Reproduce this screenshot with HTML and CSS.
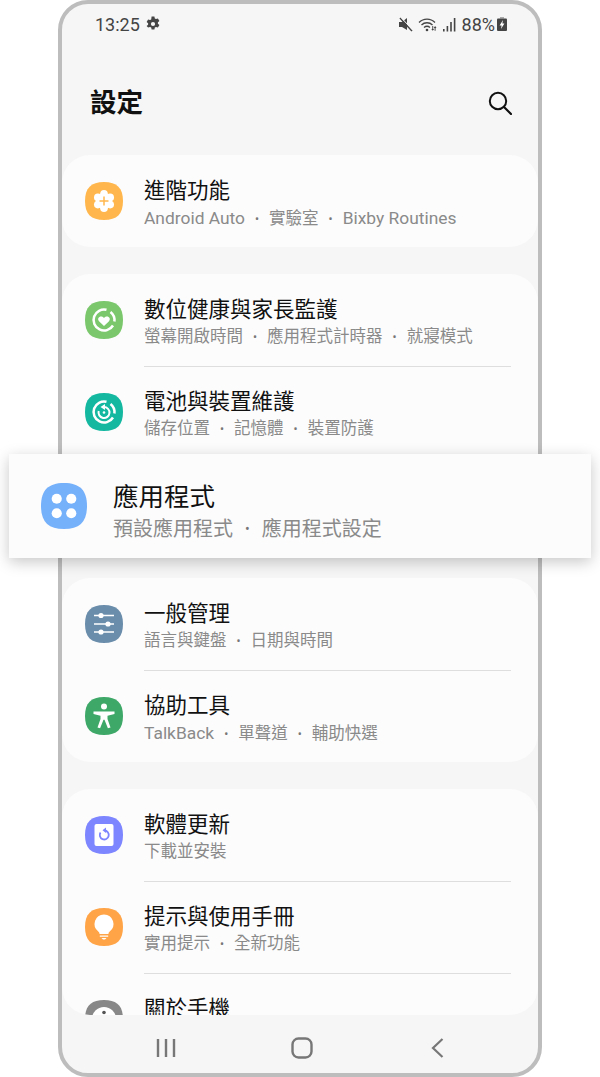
FILE: index.html
```html
<!doctype html>
<html lang="zh-Hant">
<head>
<meta charset="utf-8">
<title>設定</title>
<link rel="stylesheet" href="styles.css">
</head>

<body>
	<div class="phone">
		<div class="screen">
			<div class="status">
				<span class="time">13:25</span>
				<svg class="st-gear" viewBox="0 0 16 16"><path fill-rule="evenodd" fill="#444" d="M6.6 .5h2.800l.4 1.900 1.200.7 1.900-.6 1.500 2.500-1.500 1.300v1.400l1.500 1.300-1.500 2.500-1.900-.6-1.200.7-.4 1.900H6.600l-.4-1.900-1.200-.7-1.900.6L1.600 10l1.500-1.300V7.300L1.600 6l1.500-2.500 1.900.6 1.200-.7zM8 5.900a2.100 2.100 0 1 0 0 4.200 2.100 2.100 0 0 0 0-4.200z"/></svg>
				<span class="st-space"></span>
				<svg class="st-mute" viewBox="0 0 15 15"><path fill="#444" d="M1 5h3l5-4v12L4 10H1z"/><path stroke="#444" stroke-width="1.600" d="M2 1l12 13"/><path stroke="#f6f6f6" stroke-width="1" d="M3.200 .6l11.600 12.600"/></svg>
				<svg class="st-wifi" viewBox="0 0 20 15"><g fill="none" stroke="#444" stroke-width="1.300"><path d="M1 5.500C5.500 1 12.500 1 17 5.500"/><path d="M3.500 8C6.500 5 11.500 5 14.500 8"/><path d="M6 10.500c2-1.700 4-1.700 6 0"/></g><circle cx="9" cy="13" r="1.300" fill="#444"/><path fill="#444" d="M15 9v3h-1l1.500 2 1.500-2h-1V9zM18.500 14v-3h1l-1.500-2-1.500 2h1v3z" transform="translate(0 .5) scale(.95)"/></svg>
				<svg class="st-signal" viewBox="0 0 13 15"><g fill="#444"><rect x="0" y="12" width="1.600" height="2.500"/><rect x="3.600" y="9" width="1.600" height="5.500"/><rect x="7.200" y="5" width="1.600" height="9.500"/><rect x="10.800" y="1" width="1.600" height="13.500"/></g></svg>
				<span class="batt">88%</span>
				<svg class="st-batt" viewBox="0 0 10 14"><path fill="#aaa" d="M3 0h4v1.500H3z"/><rect y="1.500" width="10" height="12.500" rx="1" fill="#444"/><path fill="#fff" d="M6 3L2.600 8.400h2L4 12l3.400-5.400h-2z"/></svg>
			</div>

			<div class="header">
				<h1>設定</h1>
				<svg class="search" viewBox="0 0 24 24"><circle cx="10" cy="10" r="8.200" fill="none" stroke="#111" stroke-width="2"/><path d="M16 16l7 7" stroke="#111" stroke-width="2.200" stroke-linecap="round"/></svg>
			</div>

			<div class="list">
				<div class="card">
					<div class="row">
						<svg class="ico" viewBox="0 0 38 38"><path fill="#ffb74d" d="M19 0C32 0 38 6 38 19S32 38 19 38 0 32 0 19 6 0 19 0z"/><g fill="#fff"><circle cx="19" cy="19" r="8"/><circle cx="19" cy="11.800" r="3.800"/><circle cx="19" cy="26.200" r="3.800"/><circle cx="12.800" cy="15.400" r="3.800"/><circle cx="25.200" cy="15.400" r="3.800"/><circle cx="12.800" cy="22.600" r="3.800"/><circle cx="25.200" cy="22.600" r="3.800"/></g><path stroke="#ffb74d" stroke-width="1.500" d="M14.500 19h9M19 14.500v9"/></svg>
						<div class="txt">
							<div class="tt">進階功能</div>
							<div class="sub"><span class="en">Android Auto</span><i>•</i>實驗室<i>•</i><span class="en">Bixby Routines</span></div>
						</div>
					</div>
				</div>

				<div class="card">
					<div class="row">
						<svg class="ico" viewBox="0 0 38 38"><path fill="#7bc86c" d="M19 0C32 0 38 6 38 19S32 38 19 38 0 32 0 19 6 0 19 0z"/><g fill="none" stroke="#fff" stroke-width="2.500"><path d="M21.500 8.800A10.500 10.500 0 1 0 28 24.500"/><path d="M25.500 11a10.500 10.500 0 0 1 3.900 9.500"/></g><path fill="#fff" d="M19 25l-5-4.800c-2.600-2.800 1.500-6.800 5-3.200 3.500-3.600 7.600.4 5 3.200z"/></svg>
						<div class="txt">
							<div class="tt">數位健康與家長監護</div>
							<div class="sub">螢幕開啟時間<i>•</i>應用程式計時器<i>•</i>就寢模式</div>
						</div>
					</div>
					<div class="row">
						<svg class="ico" viewBox="0 0 38 38"><path fill="#14b8a0" d="M19 0C32 0 38 6 38 19S32 38 19 38 0 32 0 19 6 0 19 0z"/><g fill="none" stroke="#fff" stroke-width="2.500"><path d="M21.500 8.800A10.500 10.500 0 1 0 28 24.500"/><path d="M25.500 11a10.500 10.500 0 0 1 3.900 9.500"/><path stroke-width="2" d="M19 14a5.500 5.500 0 1 1-5.300 4"/></g><path fill="#fff" d="M15.500 14l4.500-3v6z"/><circle cx="19" cy="19.500" r="1.300" fill="#fff"/></svg>
						<div class="txt">
							<div class="tt">電池與裝置維護</div>
							<div class="sub">儲存位置<i>•</i>記憶體<i>•</i>裝置防護</div>
						</div>
					</div>
					<div class="row row-covered"></div>
				</div>

				<div class="card">
					<div class="row">
						<svg class="ico" viewBox="0 0 38 38"><path fill="#6a8dab" d="M19 0C32 0 38 6 38 19S32 38 19 38 0 32 0 19 6 0 19 0z"/><path stroke="#fff" stroke-width="1.500" d="M9 10.500h20M9 19h20M9 27h20"/><g fill="#fff"><circle cx="16" cy="10.500" r="2.600"/><circle cx="23" cy="19" r="2.600"/><circle cx="16" cy="27" r="2.600"/></g></svg>
						<div class="txt">
							<div class="tt">一般管理</div>
							<div class="sub">語言與鍵盤<i>•</i>日期與時間</div>
						</div>
					</div>
					<div class="row">
						<svg class="ico" viewBox="0 0 38 38"><path fill="#3ea868" d="M19 0C32 0 38 6 38 19S32 38 19 38 0 32 0 19 6 0 19 0z"/><circle cx="19" cy="9.500" r="3" fill="#fff"/><path fill="#fff" d="M8.500 14.500h21v2.600l-7 1.600v3.300l3 8.500-2.600.8-3.400-8.500h-1l-3.400 8.500-2.600-.8 3-8.500v-3.300l-7-1.600z"/></svg>
						<div class="txt">
							<div class="tt">協助工具</div>
							<div class="sub"><span class="en">TalkBack</span><i>•</i>單聲道<i>•</i>輔助快選</div>
						</div>
					</div>
				</div>

				<div class="card">
					<div class="row">
						<svg class="ico" viewBox="0 0 38 38"><path fill="#7d85ff" d="M19 0C32 0 38 6 38 19S32 38 19 38 0 32 0 19 6 0 19 0z"/><rect x="9.500" y="8" width="19" height="22" rx="2" fill="#fff"/><path fill="none" stroke="#7d85ff" stroke-width="1.800" d="M15.500 16.500a4.500 4.500 0 1 0 4-2"/><path fill="#7d85ff" d="M21 11.500v5.500l-3.500-2.700z"/></svg>
						<div class="txt">
							<div class="tt">軟體更新</div>
							<div class="sub">下載並安裝</div>
						</div>
					</div>
					<div class="row">
						<svg class="ico" viewBox="0 0 38 38"><path fill="#ffa447" d="M19 0C32 0 38 6 38 19S32 38 19 38 0 32 0 19 6 0 19 0z"/><path fill="#fff" d="M19 6.500a9.500 9.500 0 0 1 5.500 17.200c-.8.600-1 1.300-1 2.300h-9c0-1-.2-1.700-1-2.300A9.500 9.500 0 0 1 19 6.500zM14.800 27.500h8.400v1.300h-8.400zM16.500 30h5L20 31.500h-2z"/></svg>
						<div class="txt">
							<div class="tt">提示與使用手冊</div>
							<div class="sub">實用提示<i>•</i>全新功能</div>
						</div>
					</div>
					<div class="row">
						<svg class="ico" viewBox="0 0 38 38"><path fill="#888" d="M19 0C32 0 38 6 38 19S32 38 19 38 0 32 0 19 6 0 19 0z"/><circle cx="19" cy="19" r="12" fill="#fff"/><circle cx="19" cy="12.500" r="1.800" fill="#555"/><rect x="17.500" y="16" width="3" height="10" fill="#555"/></svg>
						<div class="txt">
							<div class="tt">關於手機</div>
						</div>
					</div>
				</div>
			</div>

			<div class="nav">
				<svg class="n-recent" viewBox="0 0 20 20"><path stroke="#777" stroke-width="2.400" d="M2 1v18M10 1v18M18 1v18"/></svg>
				<svg class="n-home" viewBox="0 0 22 22"><rect x="1.500" y="1.500" width="19" height="19" rx="6" fill="none" stroke="#777" stroke-width="2.400"/></svg>
				<svg class="n-back" viewBox="0 0 13 20"><path fill="none" stroke="#777" stroke-width="2.200" d="M11.500 1L2 10l9.500 9"/></svg>
			</div>
		</div>

		<div class="popup">
			<svg class="ico-big" viewBox="0 0 38 38"><path fill="#75b0fb" d="M19 0C32 0 38 6 38 19S32 38 19 38 0 32 0 19 6 0 19 0z"/><g fill="#fff"><circle cx="13" cy="13" r="4.200"/><circle cx="25" cy="13" r="4.200"/><circle cx="13" cy="25" r="4.200"/><circle cx="25" cy="25" r="4.200"/></g></svg>
			<div class="p-txt">
				<div class="p-tt">應用程式</div>
				<div class="p-sub">預設應用程式<i>•</i>應用程式設定</div>
			</div>
		</div>
	</div>
</body>
</html>
```

FILE: styles.css
```css
*{ margin:0; padding:0; box-sizing:border-box; }
html,body{ background:#fff; }
body{ font-family:Roboto,"Noto Sans CJK TC",sans-serif; color:#111; width:600px; height:1077px; overflow:hidden; }
svg{ display:block; flex:none; }

.phone{ position:relative; width:484px; height:1077px; margin:0 auto; border:4px solid #bdbdbd; border-radius:30px; background:#f6f6f6; }
.screen{ display:flex; flex-direction:column; height:100%; }

.status{ display:flex; align-items:center; height:40px; padding:0 31px 0 33px; color:#444; font-size:18px; flex:none; }
.time{ width:50px; }
.st-gear{ width:16px; height:16px; }
.st-space{ flex:1; }
.st-mute{ width:15px; height:15px; }
.st-wifi{ width:20px; height:15px; margin-left:5px; }
.st-signal{ width:13px; height:15px; margin-left:5px; }
.batt{ margin-left:6px; }
.st-batt{ width:10px; height:14px; margin-left:2px; }

.header{ display:flex; align-items:center; justify-content:space-between; padding:41px 26px 34px 28px; flex:none; }
.header h1{ font-size:26.500px; line-height:36px; font-weight:700; color:#111; }
.search{ width:24px; height:24px; }

.list{ flex:1; min-height:0; overflow:hidden; border-radius:0 0 28px 28px; }
.card{ background:#fcfcfc; border-radius:28px; margin-bottom:27px; }
.row{ display:flex; align-items:stretch; height:92px; padding:0 27px 0 23px; }
.row-covered{ height:93px; }
.ico{ width:38px; height:38px; margin:27px 21px 0 0; }
.txt{ flex:1; padding-top:21px; }
.row + .row .txt{ padding-top:20px; border-top:1px solid #dedede; }
.tt{ font-size:21.500px; line-height:30px; color:#111; }
.sub{ font-size:16.500px; line-height:24px; color:#8a8a8a; }
.sub i{ font-style:normal; margin:0 10px; font-size:12px; vertical-align:1px; color:#777; }
.sub .en{ font-size:17.400px; }

.nav{ display:flex; align-items:center; height:58px; flex:none; padding-top:8px; }
.n-recent{ width:20px; height:20px; margin-left:94px; }
.n-home{ width:22px; height:22px; margin-left:115px; }
.n-back{ width:13px; height:20px; margin-left:118px; }

.popup{ position:absolute; left:-53px; top:450px; width:582px; height:104px; display:flex; align-items:center; gap:26px; padding-left:32px; background:#fcfcfc; box-shadow:0 4px 14px rgba(0,0,0,.22); }
.ico-big{ width:46px; height:46px; }
.p-txt{ padding-top:10px; }
.p-tt{ font-size:25.500px; line-height:36px; color:#111; }
.p-sub{ font-size:20px; line-height:28px; color:#8a8a8a; }
.p-sub i{ font-style:normal; margin:0 12px; font-size:14px; vertical-align:2px; color:#777; }
```
